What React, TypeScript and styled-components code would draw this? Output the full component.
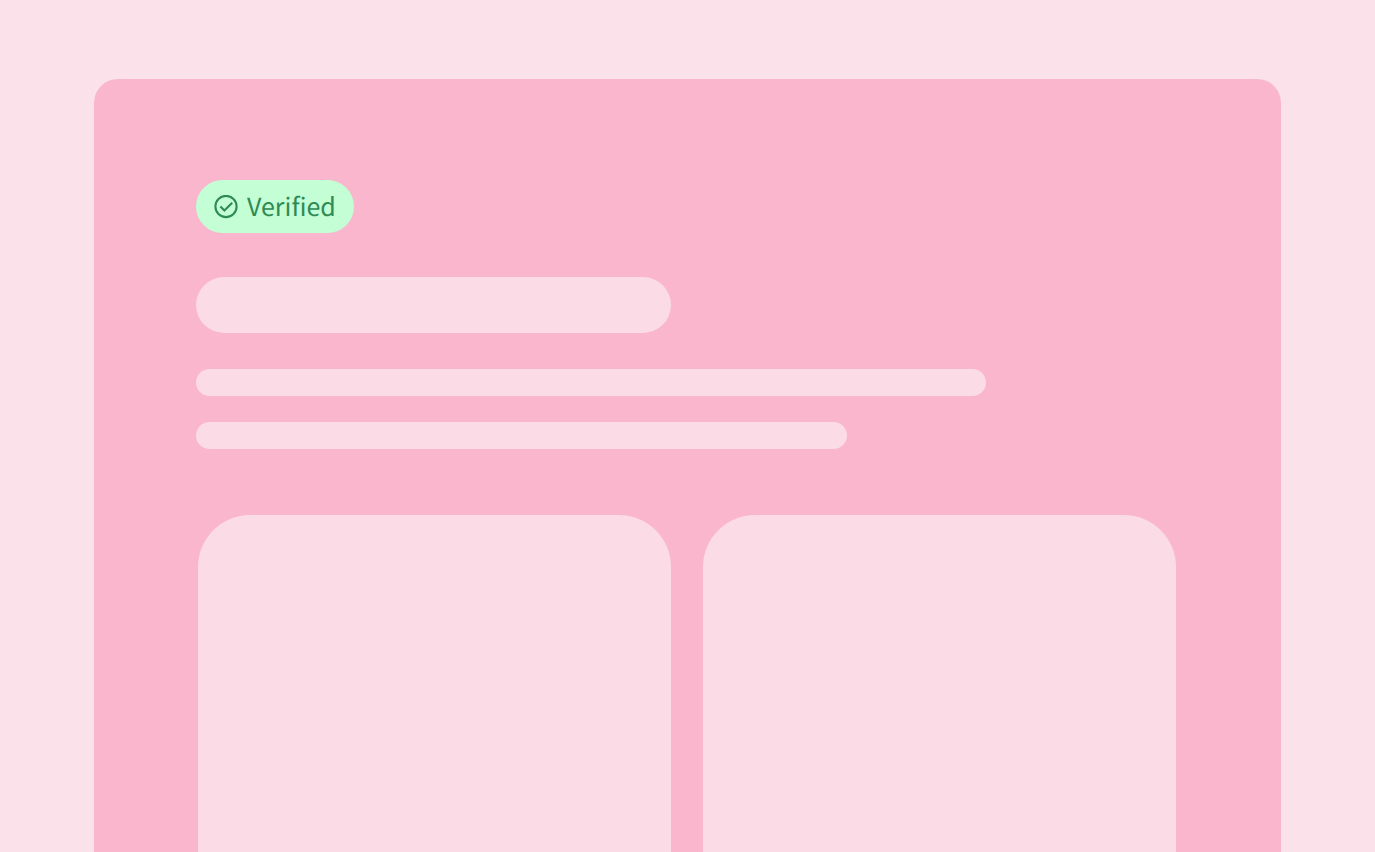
import React from "react";
import styled, { createGlobalStyle } from "styled-components";

const GlobalStyle = createGlobalStyle`
  *, *::before, *::after { box-sizing: border-box; }
  body { margin: 0; background: #fbe1e9; }
`;

const Page = styled.main`
  height: 100vh;
  padding: 79px 94px 0;
  overflow: hidden;
  display: flex;
  background: #fbe1e9;
`;

const Panel = styled.section`
  flex: 1;
  display: flex;
  flex-direction: column;
  align-items: flex-start;
  padding: 101px 105px 0 102px;
  border-radius: 24px 24px 0 0;
  background: #fab6cd;
`;

const Badge = styled.span`
  display: flex;
  align-items: center;
  gap: 9px;
  height: 53px;
  padding: 0 18px;
  border-radius: 27px;
  background: #c3fed5;
  color: #2f8b55;
  font: 400 25px/50px "Noto Sans CJK SC", "Noto Sans", sans-serif;
  text-rendering: geometricPrecision;
`;

const Label = styled.span`
  padding-bottom: 1px;
`;

const Bar = styled.div<{ $width: string; $height: number; $top: number }>`
  width: ${(p) => p.$width};
  height: ${(p) => p.$height}px;
  margin-top: ${(p) => p.$top}px;
  border-radius: 28px;
  background: #fbdbe5;
`;

const Cards = styled.div`
  align-self: stretch;
  flex: 1;
  display: grid;
  grid-template-columns: 1fr 1fr;
  gap: 32px;
  margin-top: 66px;
  padding-left: 2px;
`;

const Card = styled.div`
  border-radius: 52px 52px 0 0;
  background: #fbdbe5;
`;

const CheckIcon = () => (
  <svg width="24" height="24" viewBox="0 0 24 24" fill="none" stroke="currentColor" strokeWidth="2.1" aria-hidden="true">
    <circle cx="12" cy="11.5" r="10.6" />
    <path d="M6.4 11.5l4 4 7.8-7.8" />
  </svg>
);

export default function App() {
  return (
    <>
      <GlobalStyle />
      <Page>
        <Panel>
          <Badge>
            <CheckIcon />
            <Label>Verified</Label>
          </Badge>
          <Bar $width="48.5%" $height={56} $top={44} />
          <Bar $width="80.6%" $height={27} $top={36} />
          <Bar $width="66.4%" $height={27} $top={26} />
          <Cards>
            <Card />
            <Card />
          </Cards>
        </Panel>
      </Page>
    </>
  );
}
